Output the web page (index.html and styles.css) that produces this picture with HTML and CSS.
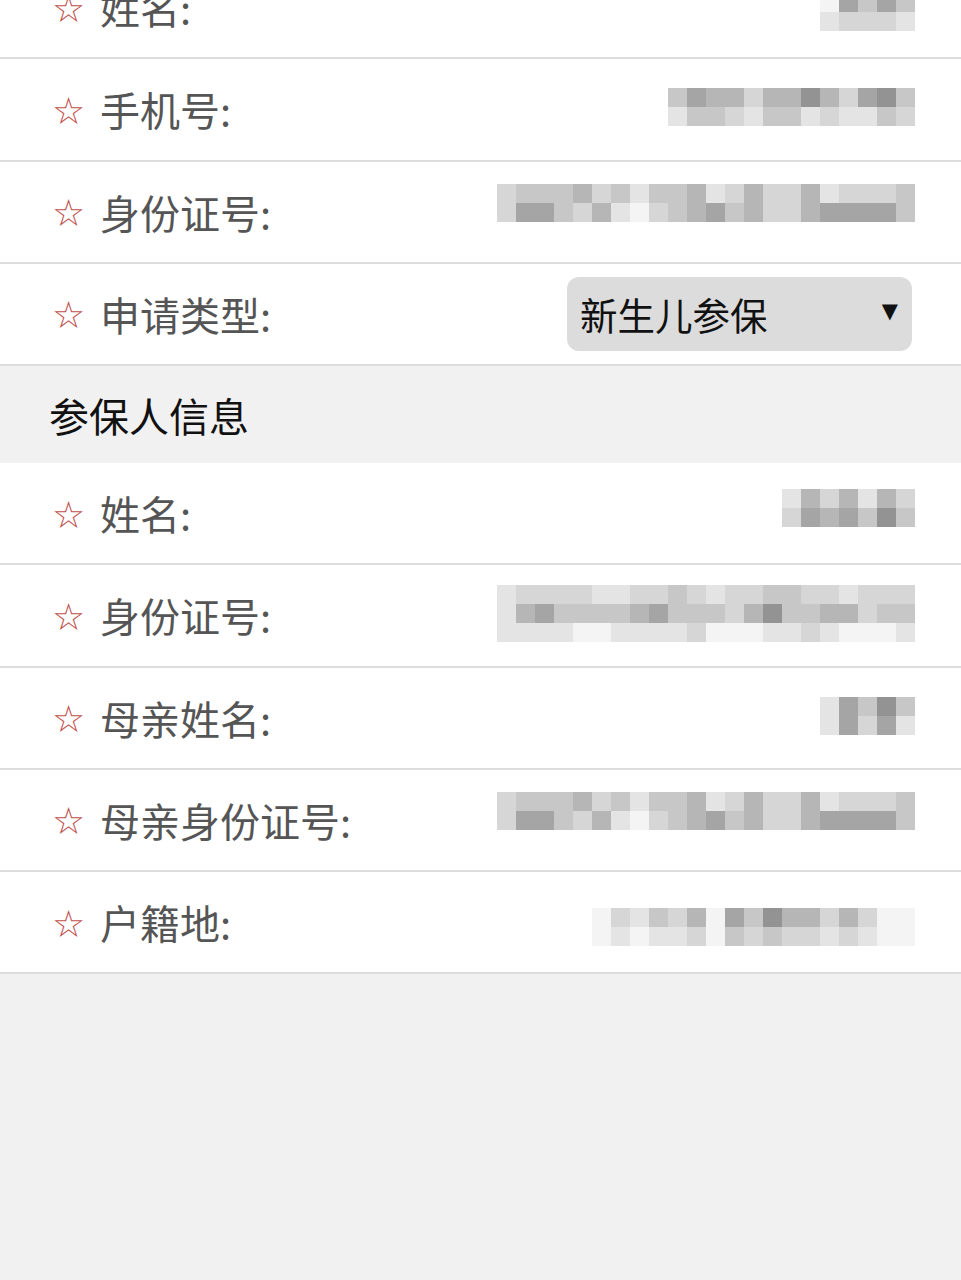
FILE: index.html
```html
<!DOCTYPE html>
<html lang="zh-CN">
<head>
<meta charset="utf-8">
<title>参保申请</title>
<link rel="stylesheet" href="styles.css">
</head>
<body>
<div class="page">
  <div class="row first">
    <div class="label"><span class="star">☆</span><span class="text">姓名:</span></div>
    <div class="mosaic low" data-m="05353|12221"></div>
  </div>
  <div class="row">
    <div class="label"><span class="star">☆</span><span class="text">手机号:</span></div>
    <div class="mosaic" data-m="3544244642563|1332133121132"></div>
  </div>
  <div class="row">
    <div class="label"><span class="star">☆</span><span class="text">身份证号:</span></div>
    <div class="mosaic high" data-m="2333423133412422412223|2553241023453422455553"></div>
  </div>
  <div class="row">
    <div class="label"><span class="star">☆</span><span class="text">申请类型:</span></div>
    <div class="select"><span class="select-text">新生儿参保</span><span class="caret">▼</span></div>
  </div>
  <div class="section">参保人信息</div>
  <div class="row">
    <div class="label"><span class="star">☆</span><span class="text">姓名:</span></div>
    <div class="mosaic raise" data-m="1424142|2545363"></div>
  </div>
  <div class="row">
    <div class="label"><span class="star">☆</span><span class="text">身份证号:</span></div>
    <div class="mosaic" data-m="1222211223212233221222|1453333453332463344233|1111001111200011210001"></div>
  </div>
  <div class="row">
    <div class="label"><span class="star">☆</span><span class="text">母亲姓名:</span></div>
    <div class="mosaic" data-m="15363|15251"></div>
  </div>
  <div class="row">
    <div class="label"><span class="star">☆</span><span class="text">母亲身份证号:</span></div>
    <div class="mosaic high" data-m="2333423133412422412223|2553241023453422455553"></div>
  </div>
  <div class="row">
    <div class="label"><span class="star">☆</span><span class="text">户籍地:</span></div>
    <div class="mosaic low" data-m="02132405364424200|01011203232212100"></div>
  </div>
</div>
<script src="app.js"></script>
</body>
</html>
```
FILE: styles.css
```css
* { box-sizing: border-box; }
html, body {
  margin: 0;
  padding: 0;
  background: #f1f1f1;
  font-family: "Noto Sans CJK SC", "Noto Sans", sans-serif;
}
.page {
  display: flex;
  flex-direction: column;
  margin-top: -43px;
}
.row {
  display: flex;
  align-items: center;
  justify-content: space-between;
  height: 102.25px;
  background: #fff;
  border-bottom: 2px solid #dddddd;
  padding: 0 46px 0 52px;
}
.label {
  display: flex;
  align-items: center;
}
.star {
  font-family: "DejaVu Sans", sans-serif;
  font-size: 37px;
  line-height: 1;
  color: #c0504d;
  width: 48px;
  position: relative;
  top: 2px;
}
.text {
  font-size: 40px;
  line-height: 1;
  color: #555555;
}
.section {
  height: 97px;
  display: flex;
  align-items: center;
  padding-left: 49px;
  font-size: 40px;
  color: #111;
  background: #f1f1f1;
}
.select {
  width: 345px;
  height: 74px;
  margin-right: 3px;
  background: #dcdcdc;
  border-radius: 12px;
  display: flex;
  align-items: center;
  justify-content: space-between;
  padding: 0 14px 0 13px;
}
.select-text {
  font-size: 37.5px;
  color: #111;
  line-height: 1;
}
.caret {
  font-family: "DejaVu Sans", sans-serif;
  font-size: 21px;
  color: #111;
  position: relative;
  top: -3px;
}
.mosaic {
  display: flex;
  flex-direction: column;
  filter: blur(0.6px);
  position: relative;
  top: -2px;
}
.mosaic.low { top: 5px; }
.mosaic.high { top: -9px; }
.mosaic.raise { top: -5px; }
.mrow { display: flex; }
.cell { width: 19px; height: 19px; }
.c0 { background: #f4f4f4; }
.c1 { background: #e4e4e4; }
.c2 { background: #d6d6d6; }
.c3 { background: #c7c7c7; }
.c4 { background: #b6b6b6; }
.c5 { background: #a5a5a5; }
.c6 { background: #939393; }
```
FILE: app.js
```js
document.querySelectorAll('.mosaic').forEach(function (m) {
  m.getAttribute('data-m').split('|').forEach(function (r) {
    var row = document.createElement('div');
    row.className = 'mrow';
    r.split('').forEach(function (d) {
      var c = document.createElement('span');
      c.className = 'cell c' + d;
      row.appendChild(c);
    });
    m.appendChild(row);
  });
});
```
